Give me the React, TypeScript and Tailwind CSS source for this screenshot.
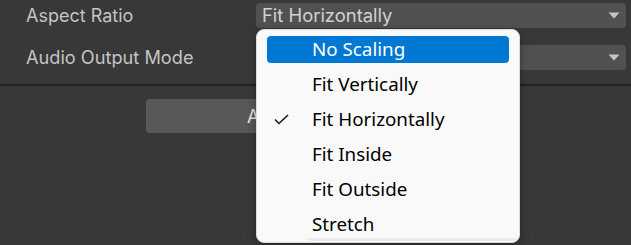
import React from "react";

const items = ["No Scaling", "Fit Vertically", "Fit Horizontally", "Fit Inside", "Fit Outside", "Stretch"];

function Arrow() {
  return (
    <svg width="12" height="7" viewBox="0 0 12 7" className="shrink-0">
      <path d="M0.5 0.5 L11.5 0.5 L6 6.5 Z" fill="#c4c4c4" />
    </svg>
  );
}

export default function App() {
  return (
    <div
      className="relative w-[631px] h-[245px] overflow-hidden bg-[#383838]"
      style={{ fontFamily: "Inter, 'Noto Sans', sans-serif" }}
    >
      <div className="flex flex-col pt-[3px]">
        <div className="flex h-[25px] items-center">
          <div className="w-[256px] pl-[26px] text-[18px] text-[#c4c4c4] leading-none">Aspect Ratio</div>
          <div className="flex h-full flex-1 mr-[5px] items-center justify-between rounded-[4px] bg-[#515151] pl-[6px] pr-[6px]">
            <span className="text-[18.4px] text-[#d2d2d2] leading-none">Fit Horizontally</span>
            <Arrow />
          </div>
        </div>
        <div className="mt-[17px] flex h-[25px] items-center">
          <div className="w-[256px] pl-[26px] text-[18.2px] text-[#c4c4c4] leading-none">Audio Output Mode</div>
          <div className="flex h-full flex-1 mr-[5px] items-center justify-end rounded-[4px] bg-[#515151] pr-[6px]">
            <Arrow />
          </div>
        </div>
        <div className="mt-[14px] h-[2px] bg-[#232323]" />
        <div className="mt-[13px] ml-[146px] flex h-[34px] w-[344px] items-center rounded-[4px] bg-[#585858] pl-[101px] text-[18px] text-[#e4e4e4]">
          Apply
        </div>
      </div>

      <div
        className="absolute left-[256px] top-[29px] h-[214px] w-[264px] overflow-hidden rounded-[8px] border border-[#dcdcdc] bg-[#f9f9f9] pt-[2px] shadow-[0_2px_8px_rgba(0,0,0,0.35)]"
        style={{ fontFamily: "'Noto Sans', 'Open Sans', sans-serif" }}
      >
        {items.map((it, i) => (
          <div key={it} className="relative flex h-[35px] items-center px-[10px]">
            <div
              className={
                i === 0
                  ? "flex h-[27px] w-full items-center rounded-[4px] bg-[#0078d4] text-white"
                  : "flex h-[27px] w-full items-center text-[#000000]"
              }
            >
              <div className="w-[45px] shrink-0 pl-[7px]">
                {i === 2 && (
                  <svg width="15" height="11" viewBox="0 0 15 11">
                    <path d="M1 5.5 L5 9.5 L14 1" fill="none" stroke="#1a1a1a" strokeWidth="1.6" />
                  </svg>
                )}
              </div>
              <span className="text-[18.8px] leading-none">{it}</span>
            </div>
          </div>
        ))}
        <div className="ml-[50px] mt-[-4px] h-[3px] bg-[#ececec]" />
      </div>
    </div>
  );
}
